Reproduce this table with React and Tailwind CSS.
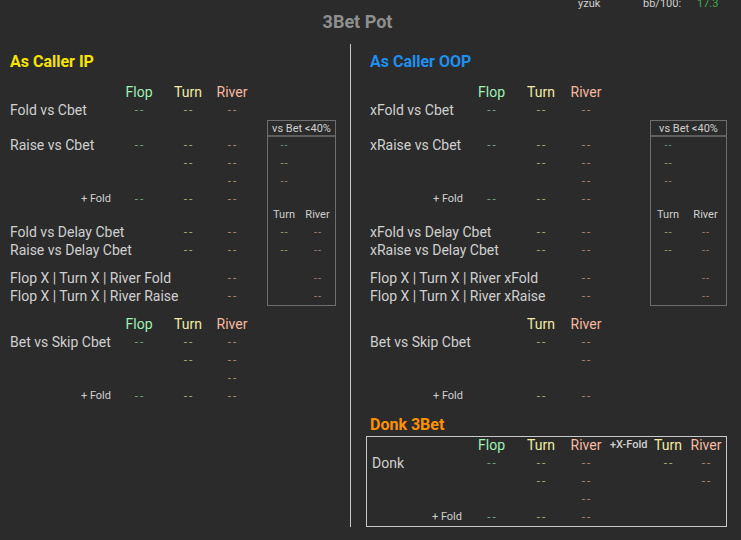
import React from "react";

const LC = ["w-[105px]", "w-[48px]", "w-[50px]", "w-[38px]"];
const RC = ["w-[97px]", "w-[49px]", "w-[50px]", "w-[40px]"];
const DC = ["text-[#6f9f7c]", "text-[#aaa36f]", "text-[#aa8370]"];
const HC = ["text-[#9ef0b4]", "text-[#f2eca2]", "text-[#f7b9a2]"];
const HN = ["Flop", "Turn", "River"];

function Dash({ c }) {
  return (
    <span className={`${c} text-[12px] leading-none tracking-[2px] pl-[2px]`}>--</span>
  );
}

function Row({ cols, label, fold, v = [0, 0, 0] }) {
  return (
    <div className="flex h-[18px] items-center">
      <div
        className={`${cols[0]} shrink-0 whitespace-nowrap ${
          fold ? "text-right pr-[4px] text-[11px]" : "text-[14px]"
        } text-[#d0d0d0]`}
      >
        {fold ? "+ Fold" : label}
      </div>
      {[0, 1, 2].map((i) => (
        <div key={i} className={`${cols[i + 1]} shrink-0 flex justify-center`}>
          {v[i] ? <Dash c={DC[i]} /> : null}
        </div>
      ))}
    </div>
  );
}

function Header({ cols, show = [1, 1, 1] }) {
  return (
    <div className="flex h-[18px] items-center">
      <div className={`${cols[0]} shrink-0`} />
      {[0, 1, 2].map((i) => (
        <div key={i} className={`${cols[i + 1]} shrink-0 text-center text-[14px] ${HC[i]}`}>
          {show[i] ? HN[i] : ""}
        </div>
      ))}
    </div>
  );
}

function Table({ cols, labels, skipFlop }) {
  return (
    <div className="flex flex-col shrink-0">
      <Header cols={cols} />
      <Row cols={cols} label={labels[0]} v={[1, 1, 1]} />
      <div className="h-[17px]" />
      <Row cols={cols} label={labels[1]} v={[1, 1, 1]} />
      <Row cols={cols} label="" v={[0, 1, 1]} />
      <Row cols={cols} label="" v={[0, 0, 1]} />
      <Row cols={cols} fold v={[1, 1, 1]} />
      <div className="h-[15px]" />
      <Row cols={cols} label={labels[2]} v={[0, 1, 1]} />
      <Row cols={cols} label={labels[3]} v={[0, 1, 1]} />
      <div className="h-[10px]" />
      <Row cols={cols} label={labels[4]} v={[0, 0, 1]} />
      <Row cols={cols} label={labels[5]} v={[0, 0, 1]} />
      <div className="h-[10px]" />
      {skipFlop ? (
        <>
          <Header cols={cols} show={[0, 1, 1]} />
          <Row cols={cols} label="Bet vs Skip Cbet" v={[0, 1, 1]} />
          <Row cols={cols} label="" v={[0, 0, 1]} />
          <Row cols={cols} label="" v={[0, 0, 0]} />
          <Row cols={cols} fold v={[0, 1, 1]} />
        </>
      ) : (
        <>
          <Header cols={cols} />
          <Row cols={cols} label="Bet vs Skip Cbet" v={[1, 1, 1]} />
          <Row cols={cols} label="" v={[0, 1, 1]} />
          <Row cols={cols} label="" v={[0, 0, 1]} />
          <Row cols={cols} fold v={[1, 1, 1]} />
        </>
      )}
    </div>
  );
}

function SmallDash({ c }) {
  return <span className={`${c} text-[11px] leading-none tracking-[1px] pl-[1px]`}>--</span>;
}

function SideBox({ w, c1, c2 }) {
  const sd = ["text-[#6a9576]", "text-[#a19c6c]", "text-[#a07e6e]"];
  return (
    <div className={`${w} shrink-0 mt-[37px] border border-[#6e6e6e] flex flex-col`}>
      <div className="h-[14px] border-b-2 border-[#5e5e5e] flex items-center justify-center text-[11px] leading-none text-[#d0d0d0] box-content">
        vs Bet &lt;40%
      </div>
      <div className="flex h-[17px] items-center">
        <div className={`${c1} flex justify-center`}><SmallDash c={sd[0]} /></div>
      </div>
      <div className="flex h-[18px] items-center">
        <div className={`${c1} flex justify-center`}><SmallDash c={sd[1]} /></div>
      </div>
      <div className="flex h-[18px] items-center">
        <div className={`${c1} flex justify-center`}><SmallDash c={sd[2]} /></div>
      </div>
      <div className="h-[17px]" />
      <div className="flex h-[16px] items-center text-[11px] text-[#d0d0d0]">
        <div className={`${c1} text-center`}>Turn</div>
        <div className={`${c2} text-center`}>River</div>
      </div>
      {[0, 1].map((k) => (
        <div key={k} className="flex h-[18px] items-center">
          <div className={`${c1} flex justify-center`}><SmallDash c={sd[1]} /></div>
          <div className={`${c2} flex justify-center`}><SmallDash c={sd[2]} /></div>
        </div>
      ))}
      <div className="h-[10px]" />
      {[0, 1].map((k) => (
        <div key={k} className="flex h-[18px] items-center">
          <div className={`${c1}`} />
          <div className={`${c2} flex justify-center`}><SmallDash c={sd[2]} /></div>
        </div>
      ))}
    </div>
  );
}

function DonkRow({ label, fold, v }) {
  const cols = ["w-[49px]", "w-[50px]", "w-[40px]"];
  return (
    <div className="flex h-[18px] items-center">
      <div
        className={`w-[100px] shrink-0 whitespace-nowrap ${
          fold ? "text-right pr-[5px] text-[11px]" : "pl-[5px] text-[14px]"
        } text-[#d0d0d0]`}
      >
        {fold ? "+ Fold" : label}
      </div>
      {[0, 1, 2].map((i) => (
        <div key={i} className={`${cols[i]} shrink-0 flex justify-center`}>
          {v[i] ? <Dash c={DC[i]} /> : null}
        </div>
      ))}
      <div className="w-[44px] shrink-0" />
      <div className="w-[36px] shrink-0 flex justify-center">
        {v[3] ? <Dash c={DC[1]} /> : null}
      </div>
      <div className="w-[40px] shrink-0 flex justify-center">
        {v[4] ? <Dash c={DC[2]} /> : null}
      </div>
    </div>
  );
}

function DonkBox() {
  return (
    <div className="mt-[1px] -ml-[4px] w-[361px] border border-[#c8c8c8] flex flex-col">
      <div className="flex h-[17px] items-center text-[14px]">
        <div className="w-[100px] shrink-0" />
        <div className={`w-[49px] shrink-0 text-center ${HC[0]}`}>Flop</div>
        <div className={`w-[50px] shrink-0 text-center ${HC[1]}`}>Turn</div>
        <div className={`w-[40px] shrink-0 text-center ${HC[2]}`}>River</div>
        <div className="w-[44px] shrink-0 pl-[4px] text-[11px] font-medium text-[#d0d0d0] whitespace-nowrap">
          +X-Fold
        </div>
        <div className={`w-[36px] shrink-0 text-center ${HC[1]}`}>Turn</div>
        <div className={`w-[40px] shrink-0 text-center ${HC[2]}`}>River</div>
      </div>
      <DonkRow label="Donk" v={[1, 1, 1, 1, 1]} />
      <DonkRow label="" v={[0, 1, 1, 0, 1]} />
      <DonkRow label="" v={[0, 0, 1, 0, 0]} />
      <DonkRow fold v={[1, 1, 1, 0, 0]} />
    </div>
  );
}

export default function App() {
  return (
    <div
      className="w-[741px] h-[540px] overflow-hidden bg-[#2b2b2b] flex flex-col"
      style={{ fontFamily: "Roboto, 'Noto Sans', sans-serif" }}
    >
      <div className="-mt-[1px] h-[10px] flex text-[11px] leading-[10px] text-[#d0d0d0] pl-[578px] shrink-0">
        <span className="w-[65px]">yzuk</span>
        <span className="w-[54px]">bb/100:</span>
        <span className="text-[#43ad4b]">17.3</span>
      </div>
      <div className="mt-[2px] h-[22px] w-[715px] text-center text-[18px] leading-[22px] font-bold text-[#8f8f8f] shrink-0">
        3Bet Pot
      </div>
      <div className="mt-[11px] flex">
        <div className="w-[350px] shrink-0 pl-[10px] pt-[8px] flex flex-col">
          <div className="h-[20px] text-[16px] leading-[20px] font-bold text-[#f7e400]">As Caller IP</div>
          <div className="mt-[11px] flex items-start">
            <Table
              cols={LC}
              labels={[
                "Fold vs Cbet",
                "Raise vs Cbet",
                "Fold vs Delay Cbet",
                "Raise vs Delay Cbet",
                "Flop X | Turn X | River Fold",
                "Flop X | Turn X | River Raise",
              ]}
            />
            <div className="ml-[16px]">
              <SideBox w="w-[69px]" c1="w-[32px]" c2="w-[35px]" />
            </div>
          </div>
        </div>
        <div className="w-px h-[483px] bg-[#c8c8c8] shrink-0" />
        <div className="pl-[19px] pt-[8px] flex flex-col">
          <div className="h-[20px] text-[16px] leading-[20px] font-bold text-[#1f8fef]">As Caller OOP</div>
          <div className="mt-[11px] flex items-start">
            <Table
              cols={RC}
              skipFlop
              labels={[
                "xFold vs Cbet",
                "xRaise vs Cbet",
                "xFold vs Delay Cbet",
                "xRaise vs Delay Cbet",
                "Flop X | Turn X | River xFold",
                "Flop X | Turn X | River xRaise",
              ]}
            />
            <div className="ml-[44px]">
              <SideBox w="w-[77px]" c1="w-[34px]" c2="w-[41px]" />
            </div>
          </div>
          <div className="mt-[10px] h-[20px] text-[16px] leading-[20px] font-bold text-[#ff9100]">Donk 3Bet</div>
          <DonkBox />
        </div>
      </div>
    </div>
  );
}
